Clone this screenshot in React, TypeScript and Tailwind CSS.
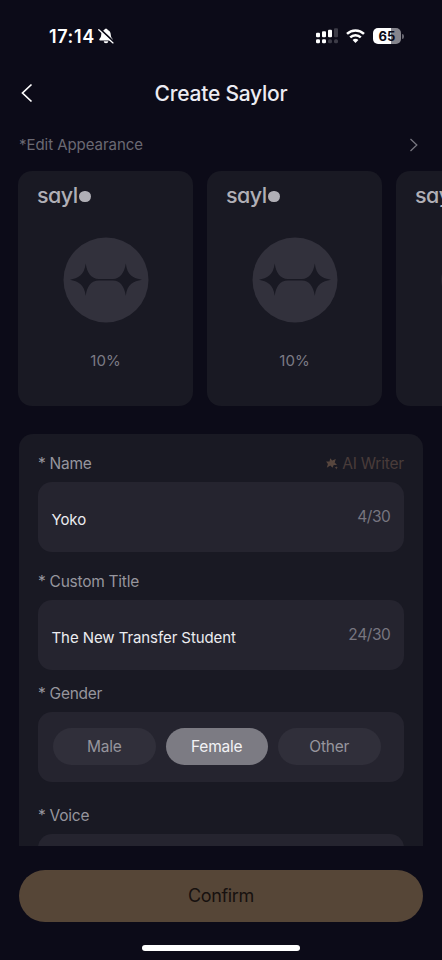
import React from "react";

const cards = [10, 10, 10];

function BellOff() {
  return (
    <svg className="ml-[3px] h-4 w-4" viewBox="0 0 16 16" fill="none">
      <path d="M8 .8C7 .8 6.500 1.300 6.300 2 4.200 2.700 3.300 4.500 3.200 7c-.1 2.100-.8 2.800-1.600 3.700-.8.9-.3 1.700.6 1.700h11.600c.9 0 1.400-.8.6-1.700-.8-.9-1.500-1.600-1.600-3.700C12.700 4.500 11.800 2.700 9.700 2 9.500 1.300 9 .8 8 .8Z" fill="#fff" />
      <path d="M5.700 13.300h4.600a2.300 2 0 0 1-4.600 0Z" fill="#fff" />
      <path d="M1.500 .8 15.500 13.800" stroke="#0c0b18" strokeWidth="2.200" />
      <path d="M.8 1.700 15 14.900" stroke="#fff" strokeWidth="1.300" strokeLinecap="round" />
    </svg>
  );
}

function Signal() {
  return (
    <svg className="ml-[1px] h-4 w-[22px]" viewBox="0 0 22 16">
      <g fill="#fff">
        <rect x="0" y="4.800" width="4" height="4.500" rx="1" />
        <rect x="6" y="3.300" width="4" height="6" rx="1" />
        <rect x="12" y="1.800" width="4" height="7.500" rx="1" />
        <rect x="0" y="11.300" width="4" height="4" rx="1.200" />
        <rect x="6" y="11.300" width="4" height="4" rx="1.200" />
      </g>
      <g fill="#3d3c47">
        <rect x="18" y="0.300" width="4" height="9" rx="1" />
        <rect x="12" y="11.300" width="4" height="4" rx="1.500" />
        <rect x="18" y="11.300" width="4" height="4" rx="1.500" />
      </g>
    </svg>
  );
}

function Wifi() {
  return (
    <svg className="ml-2 h-[14px] w-[19px]" viewBox="0 0 19 14" fill="none" stroke="#fff" strokeWidth="2.500">
      <path d="M1 4.900a12.200 12.200 0 0 1 17 0" />
      <path d="M4.200 8.300a7.600 7.600 0 0 1 10.600 0" />
      <path d="M6.600 10.900a4 4 0 0 1 5.800 0L9.500 13.900Z" fill="#fff" stroke="none" />
    </svg>
  );
}

function Logo() {
  return (
    <div className="flex h-7 items-center text-[#b0afb6]">
      <span className="text-[21.500px] leading-7 font-[550] tracking-[-0.550px] [font-feature-settings:'cv11']">sayl</span>
      <span className="mt-[3px] ml-[1.500px] h-[11.500px] w-[11.500px] rounded-full bg-[#b0afb6]" />
    </div>
  );
}

function Mascot() {
  return (
    <svg className="h-[86px] w-[86px]" viewBox="0 0 86 86">
      <circle cx="43" cy="43" r="42.500" fill="#32313c" />
      <path
        d="M7 42.700C15 41.200 21.200 38.500 22.700 26.500C24.200 36 28 41.900 36 41.900H50C57 41.900 61.300 36 62.800 26.500C64.300 38.500 70 41.200 79 42.700C70 44.200 64.300 47 62.800 58.800C61.300 49 57 43.500 50 43.500H36C28 43.500 24.200 49 22.700 58.800C21.200 47 15 44.200 7 42.700Z"
        fill="#191923"
      />
    </svg>
  );
}

function AppearanceCard({ percent }: { percent: number }) {
  return (
    <div className="flex h-[235px] w-[175px] shrink-0 flex-col items-center rounded-[14px] bg-[#191923]">
      <div className="mt-[10px] w-full pl-[19px]">
        <Logo />
      </div>
      <div className="mt-[27.500px]">
        <Mascot />
      </div>
      <span className="mt-[28.500px] text-[15px] leading-5 text-[#7c7b85]">{percent}%</span>
    </div>
  );
}

function Label({ children }: { children: React.ReactNode }) {
  return <span className="text-[15.500px] leading-5 tracking-[-0.260px] text-[#96959d]">*&nbsp;{children}</span>;
}

function Field({ value, count }: { value: string; count: string }) {
  return (
    <div className="flex h-[70px] items-center justify-between rounded-[14px] bg-[#25242f] px-[13.500px]">
      <span className="mt-[5px] text-[15px] leading-5 tracking-[-0.080px] text-[#ececf0]">{value}</span>
      <span className="text-[15.500px] leading-5 tracking-[-0.400px] text-[#777680]">{count}</span>
    </div>
  );
}

export default function App() {
  return (
    <div className="flex h-[960px] w-[442px] flex-col overflow-hidden bg-[#0c0b18] font-['Inter','Liberation_Sans',sans-serif]">
      <div className="flex h-[72px] shrink-0 items-center justify-between pr-[38.500px] pl-[49px]">
        <div className="flex items-center">
          <span className="mt-[1px] text-[18px] leading-6 font-semibold tracking-[0.600px] text-white">17:14</span>
          <BellOff />
        </div>
        <div className="flex items-center">
          <Signal />
          <Wifi />
          <div className="ml-2 flex h-4 w-7 items-center justify-center rounded-[5px] bg-[linear-gradient(90deg,#fff_65%,#85848c_65%)] text-[13px] leading-4 font-bold text-[#0c0b18]">
            65
          </div>
          <div className="ml-[1px] h-[5px] w-[1.500px] rounded-r-full bg-[#66656f]" />
        </div>
      </div>

      <header className="grid h-[42px] shrink-0 grid-cols-[60px_1fr_60px] items-center">
        <svg className="ml-5 h-5 w-[14px]" viewBox="0 0 14 20" fill="none" stroke="#fff" strokeWidth="1.700">
          <path d="M11.500 1.500 2.500 10l9 8.500" />
        </svg>
        <h1 className="mt-[2px] text-center text-[21px] leading-7 font-medium tracking-[-0.230px] text-[#ececf2]">Create Saylor</h1>
      </header>

      <div className="flex h-[57px] shrink-0 items-center justify-between pt-[4px] pr-[22px] pl-[19px]">
        <span className="text-[15px] leading-5 tracking-[-0.050px] text-[#6a6973]">*Edit Appearance</span>
        <svg className="h-[14px] w-3" viewBox="0 0 12 14" fill="none" stroke="#77767f" strokeWidth="1.300">
          <path d="m2.500 1 6.300 6-6.300 6" />
        </svg>
      </div>

      <div className="flex shrink-0 gap-[14px] overflow-hidden pl-[18px]">
        {cards.map((p, i) => (
          <AppearanceCard key={i} percent={p} />
        ))}
      </div>

      <div className="mx-[19px] mt-7 flex h-[412px] shrink-0 flex-col overflow-hidden rounded-t-[14px] bg-[#191923] px-[19px] pt-[20px]">
        <div className="flex items-center justify-between">
          <Label>Name</Label>
          <span className="flex items-center gap-[4px] text-[15.500px] leading-5 tracking-[-0.200px] text-[#493c3a]">
            <svg className="h-3 w-3" viewBox="0 0 12 12" fill="#57463e">
              <path d="M4.200.3 6.200 2.500 9.800 1.100 8.700 4.500l2.300 2.500-3.300.1-1.200 2.700L4.300 7.500.8 9.800l1.100-3.800L.1 3.600l3.400-.1Z" />
              <path d="m10.300 8.200.5 1.100 1.100.5-1.100.5-.5 1.100-.5-1.100-1.100-.5 1.100-.5Z" />
            </svg>
            AI Writer
          </span>
        </div>
        <div className="mt-[8px]">
          <Field value="Yoko" count="4/30" />
        </div>
        <div className="mt-[20px] flex">
          <Label>Custom Title</Label>
        </div>
        <div className="mt-[8px]">
          <Field value="The New Transfer Student" count="24/30" />
        </div>
        <div className="mt-[14px] flex">
          <Label>Gender</Label>
        </div>
        <div className="mt-[8px] flex h-[70px] shrink-0 items-center gap-[10px] rounded-[14px] bg-[#25242f] px-[15px] pb-[1px] text-[15.500px] tracking-[-0.200px] text-[#96959d]">
          <button className="h-[37px] w-[102.500px] rounded-full bg-[#302f3a]">Male</button>
          <button className="h-[37px] w-[102.500px] rounded-full bg-[#7c7b83] text-[#f2f2f5]">Female</button>
          <button className="h-[37px] w-[102.500px] rounded-full bg-[#302f3a]">Other</button>
        </div>
        <div className="mt-[24px] flex">
          <Label>Voice</Label>
        </div>
        <div className="mt-[8px] h-[70px] shrink-0 rounded-[14px] bg-[#25242f]" />
      </div>

      <button className="mx-[19px] mt-6 h-[52px] shrink-0 rounded-full bg-[#564637] pb-[1px] text-[18px] tracking-[-0.350px] text-[#17110f]">
        Confirm
      </button>
      <div className="mx-auto mt-[23px] h-[6px] w-[158px] shrink-0 rounded-full bg-white" />
    </div>
  );
}
